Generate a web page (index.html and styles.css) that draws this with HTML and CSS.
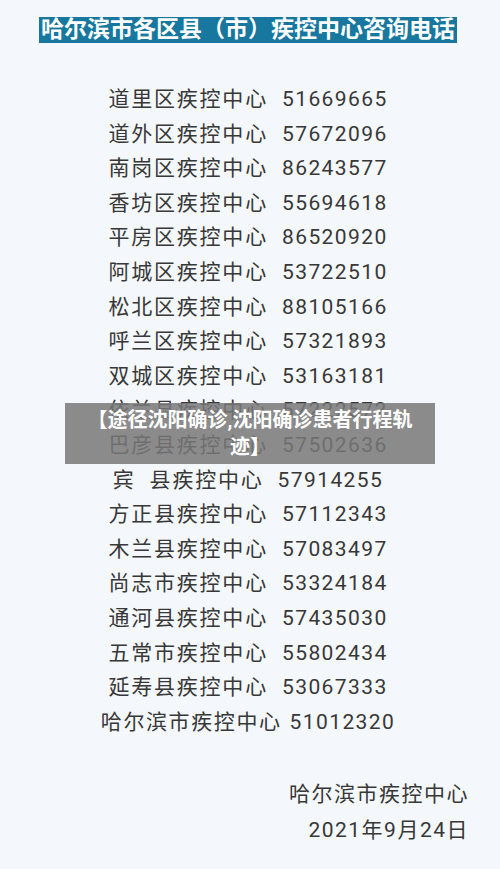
FILE: index.html
```html
<!DOCTYPE html>
<html lang="zh-CN">

<head>
    <meta charset="UTF-8" />
    <meta name="viewport" content="width=device-width, initial-scale=1.0" />
    <title>哈尔滨市各区县（市）疾控中心咨询电话</title>
    <link rel="stylesheet" href="styles.css">
</head>

<body>
    <div class="page">
        <h1 class="title"><span>哈尔滨市各区县（市）疾控中心咨询电话</span></h1>

        <ul class="phones">
            <li><span class="name">道里区疾控中心</span><span class="num">51669665</span></li>
            <li><span class="name">道外区疾控中心</span><span class="num">57672096</span></li>
            <li><span class="name">南岗区疾控中心</span><span class="num">86243577</span></li>
            <li><span class="name">香坊区疾控中心</span><span class="num">55694618</span></li>
            <li><span class="name">平房区疾控中心</span><span class="num">86520920</span></li>
            <li><span class="name">阿城区疾控中心</span><span class="num">53722510</span></li>
            <li><span class="name">松北区疾控中心</span><span class="num">88105166</span></li>
            <li><span class="name">呼兰区疾控中心</span><span class="num">57321893</span></li>
            <li><span class="name">双城区疾控中心</span><span class="num">53163181</span></li>
            <li><span class="name">依兰县疾控中心</span><span class="num">57222572</span></li>
            <li><span class="name">巴彦县疾控中心</span><span class="num">57502636</span></li>
            <li class="bin"><span class="name">宾&nbsp;&nbsp;县疾控中心</span><span class="num">57914255</span></li>
            <li><span class="name">方正县疾控中心</span><span class="num">57112343</span></li>
            <li><span class="name">木兰县疾控中心</span><span class="num">57083497</span></li>
            <li><span class="name">尚志市疾控中心</span><span class="num">53324184</span></li>
            <li><span class="name">通河县疾控中心</span><span class="num">57435030</span></li>
            <li><span class="name">五常市疾控中心</span><span class="num">55802434</span></li>
            <li><span class="name">延寿县疾控中心</span><span class="num">53067333</span></li>
            <li class="city"><span class="name">哈尔滨市疾控中心</span><span class="num">51012320</span></li>
        </ul>

        <div class="sign">
            <p>哈尔滨市疾控中心</p>
            <p>2021年9月24日</p>
        </div>

        <div class="caption">【途径沈阳确诊,沈阳确诊患者行程轨迹】</div>
    </div>
</body>

</html>
```

FILE: styles.css
```css
* {
    box-sizing: border-box;
}

body {
    margin: 0;
    background: #f4f7fc;
    font-family: Roboto, "Noto Sans CJK SC", sans-serif;
    color: #383838;
}

.page {
    position: relative;
    width: 500px;
    height: 869px;
    padding-top: 17px;
}

.title {
    margin: 0;
    text-align: center;
    font-size: 23px;
    line-height: 26px;
    font-weight: bold;
    padding-right: 4px;
}

.title span {
    display: inline-block;
    background: #17779f;
    color: #fff;
    padding: 0 2px;
    letter-spacing: 0;
}

.phones {
    list-style: none;
    margin: 39px 0 0;
    padding: 0 4px 0 0;
    text-align: center;
    font-size: 21px;
    line-height: 34.6px;
}

.phones .name {
    letter-spacing: 1.8px;
    margin-right: 14px;
}

.phones .num {
    letter-spacing: 1.4px;
}

.phones li.city .name {
    letter-spacing: 1.6px;
    margin-right: 8px;
}

.sign {
    margin-top: 37px;
    padding-right: 31px;
    text-align: right;
    font-size: 21px;
    letter-spacing: 1.5px;
}

.sign p {
    margin: 0;
    line-height: 36px;
}

.caption {
    position: absolute;
    left: 65px;
    top: 403px;
    width: 370px;
    height: 61px;
    padding: 4px 10px 0;
    background: rgba(120, 120, 120, 0.85);
    color: #fff;
    font-size: 20px;
    font-weight: bold;
    line-height: 27px;
    text-align: center;
}
```
